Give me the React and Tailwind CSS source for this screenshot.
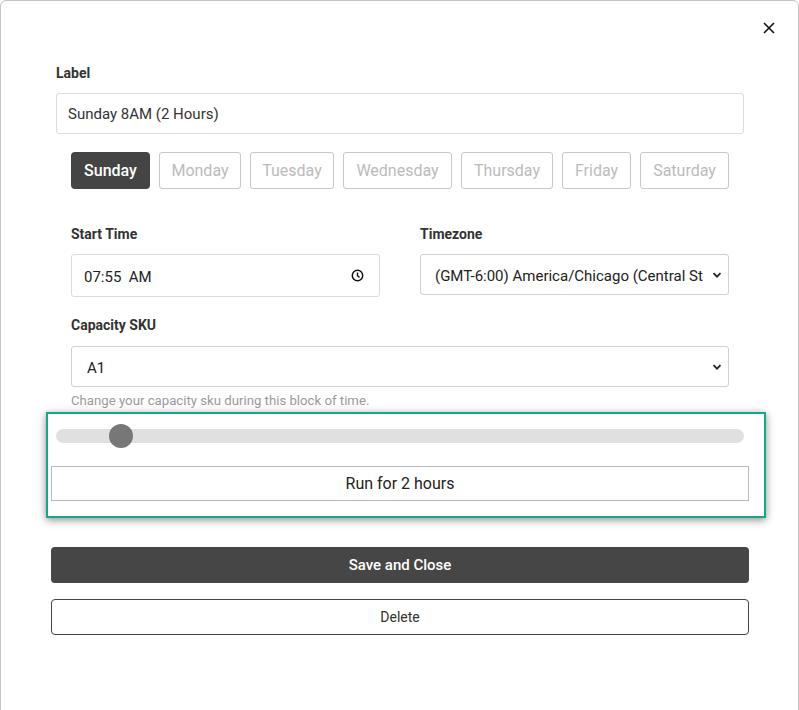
import React from 'react';

const days = [
  { name: 'Sunday', w: 'w-[79px]', active: true },
  { name: 'Monday', w: 'w-[82px]' },
  { name: 'Tuesday', w: 'w-[84px]' },
  { name: 'Wednesday', w: 'w-[109px]' },
  { name: 'Thursday', w: 'w-[92px]' },
  { name: 'Friday', w: 'w-[69px]' },
  { name: 'Saturday', w: 'w-[89px]' },
];

const Chevron = () => (
  <svg width="10" height="10" viewBox="0 0 10 10" fill="none">
    <path d="M1.5 3.2 L5 6.7 L8.5 3.2" stroke="#222" strokeWidth="1.8" />
  </svg>
);

const Clock = () => (
  <svg width="13" height="13" viewBox="0 0 14 14" fill="none">
    <circle cx="7" cy="7" r="5.6" stroke="#111" strokeWidth="1.6" />
    <path d="M7 3.8 V7.2 L9.2 9" stroke="#111" strokeWidth="1.5" />
  </svg>
);

const FieldLabel = ({ children }) => (
  <div className="h-[20px] text-[14px] leading-[20px] font-bold text-[#333]">{children}</div>
);

export default function App() {
  return (
    <div className="w-[799px] h-[710px] overflow-hidden bg-white" style={{ fontFamily: 'Roboto, "Noto Sans", sans-serif' }}>
      <div className="relative h-[760px] border border-[#c4c4c4] rounded-[6px] pt-[62px]">
        {/* close */}
        <button className="absolute top-[21px] right-[23px] w-[12px] h-[12px]">
          <svg width="12" height="12" viewBox="0 0 12 12">
            <path d="M1 1 L11 11 M11 1 L1 11" stroke="#111" strokeWidth="1.6" />
          </svg>
        </button>

        <div className="ml-[55px] w-[688px]">
          <FieldLabel>Label</FieldLabel>
          <div className="mt-[10px] h-[41px] border border-[#dcdcdc] rounded-[3px] pl-[11px] pt-[2px] flex items-center text-[15px] text-[#333]">
            Sunday 8AM (2 Hours)
          </div>
        </div>

        <div className="ml-[70px] mt-[18px] flex gap-[9px]">
          {days.map((d) => (
            <div
              key={d.name}
              className={
                d.active
                  ? `${d.w} h-[37px] rounded-[4px] bg-[#444] text-white text-[16px] font-medium flex items-center justify-center`
                  : `${d.w} h-[37px] rounded-[3px] border border-[#c8c8c8] text-[#bbb] text-[16px] flex items-center justify-center`
              }
            >
              {d.name}
            </div>
          ))}
        </div>

        <div className="ml-[70px] mt-[35px] grid grid-cols-[309px_309px] gap-x-[40px]">
          <div>
            <FieldLabel>Start Time</FieldLabel>
            <div className="mt-[10px] h-[43px] border border-[#dcdcdc] rounded-[3px] pl-[12px] pr-[15px] flex items-center justify-between text-[15px] text-[#222]">
              <span className="pt-[3px]">07:55&nbsp; AM</span>
              <Clock />
            </div>
          </div>
          <div>
            <FieldLabel>Timezone</FieldLabel>
            <div className="mt-[10px] h-[41px] border border-[#d0d0d0] rounded-[3px] pl-[14px] pr-[6px] flex items-center justify-between text-[15px] text-[#222]">
              <span className="pt-[3px] whitespace-nowrap overflow-hidden">(GMT-6:00) America/Chicago (Central St</span>
              <Chevron />
            </div>
          </div>
        </div>

        <div className="ml-[70px] w-[658px] mt-[18px]">
          <FieldLabel>Capacity SKU</FieldLabel>
          <div className="mt-[11px] h-[41px] border border-[#d0d0d0] rounded-[3px] pl-[15px] pr-[6px] flex items-center justify-between text-[15px] text-[#222]">
            <span className="pt-[3px]">A1</span>
            <Chevron />
          </div>
          <div className="mt-[5px] h-[18px] text-[13.2px] leading-[18px] text-[#9a9a9a]">
            Change your capacity sku during this block of time.
          </div>
        </div>

        <div className="ml-[55px] w-[688px] mt-[19px] relative h-[14px] rounded-full bg-[#e0e0e0]">
          <div className="absolute left-[53px] top-[-5px] w-[24px] h-[24px] rounded-full bg-[#777]" />
        </div>

        <div className="ml-[50px] w-[698px] mt-[23px] h-[35px] border border-[#bbb] flex items-center justify-center text-[16px] text-[#222]">
          Run for 2 hours
        </div>

        <div className="ml-[50px] w-[698px] mt-[46px] h-[36px] rounded-[4px] bg-[#464646] flex items-center justify-center text-[15px] font-medium text-white">
          Save and Close
        </div>

        <div className="ml-[50px] w-[698px] mt-[16px] h-[36px] rounded-[4px] border border-[#444] flex items-center justify-center text-[14px] text-[#333]">
          Delete
        </div>

        {/* tour highlight */}
        <div className="absolute left-[45px] top-[411px] w-[720px] h-[106px] border-2 border-[#12a98a] shadow-[0_2px_8px_rgba(0,0,0,0.45)] pointer-events-none" />
      </div>
    </div>
  );
}
